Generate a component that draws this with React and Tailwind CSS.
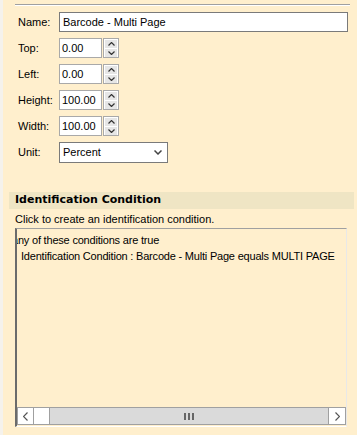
import React from "react";

const font = { fontFamily: '"Liberation Sans", Arial, sans-serif' };

function Spin({ value }) {
  return (
    <div className="flex items-center">
      <div className="w-[43px] h-[20px] bg-white border border-[#a9a9a9] text-[11px] text-black leading-[18px] pl-[2px]">
        {value}
      </div>
      <div className="ml-[1px] w-[16px] h-[20px] border border-[#a9a9a9] bg-white flex flex-col">
        <div className="h-[9px] bg-[#e6e6e6] mx-[1px] mt-[1px] flex items-center justify-center">
          <svg width="7" height="4" viewBox="0 0 7 4"><path d="M0.5 3.5 L3.5 0.5 L6.5 3.5" fill="none" stroke="#333" strokeWidth="1.2" /></svg>
        </div>
        <div className="h-[9px] bg-[#e6e6e6] mx-[1px] mt-[1px] flex items-center justify-center">
          <svg width="7" height="4" viewBox="0 0 7 4"><path d="M0.5 0.5 L3.5 3.5 L6.5 0.5" fill="none" stroke="#333" strokeWidth="1.2" /></svg>
        </div>
      </div>
    </div>
  );
}

function Row({ label, children, mt }) {
  return (
    <div className={`flex items-center ${mt}`}>
      <div className="w-[41px] text-[11px] text-black">{label}</div>
      {children}
    </div>
  );
}

export default function App() {
  return (
    <div className="w-[357px] h-[435px] bg-[#ffefcd] flex overflow-hidden" style={font}>
      <div className="w-[3px] h-full bg-[#f5f2ec]" />
      <div className="flex-1 flex flex-col">
        <div className="ml-[12px] mr-[7px] mt-[4px] h-[2px] border-t border-[#a0a0a0] border-b border-b-white" />
        <div className="ml-[15px] flex flex-col">
          <Row label="Name:" mt="mt-[6px]">
            <div className="w-[289px] h-[20px] bg-white border border-[#7a7a7a] text-[11px] leading-[18px] pl-[3px] text-black">
              Barcode - Multi Page
            </div>
          </Row>
          <Row label="Top:" mt="mt-[6px]"><Spin value="0.00" /></Row>
          <Row label="Left:" mt="mt-[6px]"><Spin value="0.00" /></Row>
          <Row label="Height:" mt="mt-[6px]"><Spin value="100.00" /></Row>
          <Row label="Width:" mt="mt-[6px]"><Spin value="100.00" /></Row>
          <Row label="Unit:" mt="mt-[6px]">
            <div className="w-[109px] h-[21px] bg-white border border-[#7a7a7a] flex items-center justify-between pl-[3px] pr-[5px] text-[11px] text-black">
              <span>Percent</span>
              <svg width="8" height="5" viewBox="0 0 8 5"><path d="M0.5 0.5 L4 4 L7.5 0.5" fill="none" stroke="#444" strokeWidth="1.5" /></svg>
            </div>
          </Row>
        </div>
        <div className="ml-[6px] mr-[3px] mt-[29px] h-[17px] bg-[#efe5c4] flex items-center pl-[6px]">
          <span className="text-[11px] font-bold text-black" style={{ fontFamily: '"DejaVu Sans", Verdana, sans-serif' }}>Identification Condition</span>
        </div>
        <div className="ml-[12px] mt-[3px] text-[11px] text-black leading-[14px]">Click to create an identification condition.</div>
        <div className="ml-[12px] mt-[2px] w-[332px] h-[199px] border-l-2 border-t border-l-[#6b6b6b] border-t-[#a0a0a0] border-r border-b border-r-[#e8e8e8] border-b-white flex flex-col overflow-hidden">
          <div className="flex-1 overflow-hidden text-[11px] text-black tracking-[-0.2px]">
            <div className="mt-[4px] ml-[-5px] whitespace-nowrap leading-[14px]">any of these conditions are true</div>
            <div className="mt-[2px] ml-[4px] whitespace-nowrap leading-[14px]">Identification Condition : Barcode - Multi Page equals MULTI PAGE</div>
          </div>
          <div className="h-[18px] mb-[1px] flex border border-[#a0a0a0] bg-white">
            <div className="w-[16px] h-full flex items-center justify-center border-r border-[#a0a0a0]">
              <svg width="5" height="9" viewBox="0 0 5 9"><path d="M4.5 0.5 L0.5 4.5 L4.5 8.5" fill="none" stroke="#555" strokeWidth="1.2" /></svg>
            </div>
            <div className="w-[15px]" />
            <div className="flex-1 bg-[#dadada] border-x border-[#a0a0a0] flex items-center justify-center gap-[2px]">
              <div className="w-[2px] h-[7px] bg-[#666]" />
              <div className="w-[2px] h-[7px] bg-[#666]" />
              <div className="w-[2px] h-[7px] bg-[#666]" />
            </div>
            <div className="w-[16px] h-full flex items-center justify-center">
              <svg width="5" height="9" viewBox="0 0 5 9"><path d="M0.5 0.5 L4.5 4.5 L0.5 8.5" fill="none" stroke="#555" strokeWidth="1.2" /></svg>
            </div>
          </div>
        </div>
      </div>
    </div>
  );
}
